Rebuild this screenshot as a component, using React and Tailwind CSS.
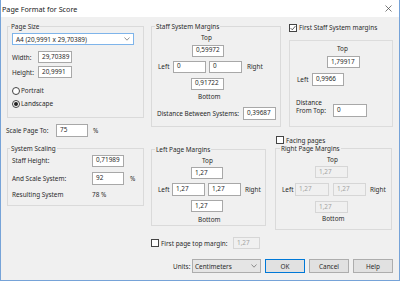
import React from "react";

function Box({ cls = "", value = "", disabled = false }) {
  return (
    <div
      className={`flex items-center pl-[3px] border whitespace-nowrap leading-none ${
        disabled
          ? "bg-[#f0f0f0] border-[#d6d6d6] text-[#a3a3a3]"
          : "bg-white border-[#a8a8a8] text-[#2a2a2a]"
      } ${cls}`}
    >
      {value}
    </div>
  );
}

function Check({ checked = false }) {
  return (
    <div className="w-[8px] h-[8px] border border-[#444444] bg-white flex items-center justify-center shrink-0">
      {checked && (
        <svg width="6" height="6" viewBox="0 0 6 6">
          <path d="M0.6 3.1 L2.3 4.8 L5.4 1.1" fill="none" stroke="#333" strokeWidth="0.8" />
        </svg>
      )}
    </div>
  );
}

function Radio({ checked = false }) {
  return (
    <div className="w-[8px] h-[8px] rounded-full border border-[#444444] bg-white flex items-center justify-center shrink-0">
      {checked && <div className="w-[4px] h-[4px] rounded-full bg-[#222222]" />}
    </div>
  );
}

function Chevron() {
  return (
    <svg width="6" height="4" viewBox="0 0 6 4" className="shrink-0">
      <polyline points="0.5,0.5 3,3.2 5.5,0.5" fill="none" stroke="#666" strokeWidth="0.7" />
    </svg>
  );
}

export default function App() {
  return (
    <div className="w-[400px] h-[281px] bg-[#f0f0f0] border-x border-b border-[#76a3d8] flex flex-col overflow-hidden text-[#2a2a2a] text-[6.4px] leading-[9px] font-['Noto_Sans',sans-serif] whitespace-nowrap">
      {/* Title bar */}
      <div className="h-[17px] bg-white flex items-center justify-between pl-[1px] pr-[7px] shrink-0">
        <span className="text-[7.2px] leading-[10px] text-[#222]">Page Format for Score</span>
        <svg width="7" height="7" viewBox="0 0 7 7">
          <path d="M0.5 0.5 L6.5 6.5 M6.5 0.5 L0.5 6.5" stroke="#444" strokeWidth="0.7" />
        </svg>
      </div>

      {/* Main area */}
      <div className="flex items-start">
        {/* Left column */}
        <div className="ml-[6px] mt-[5px] w-[137px] flex flex-col">
          <fieldset className="h-[96px] border border-[#dadada] pl-[4px] pt-[2px]">
            <legend className="-ml-[2px] px-[1px] leading-[9px]">Page Size</legend>
            <div className="w-[122px] h-[12px] bg-white border border-[#7eb4ea] flex items-center justify-between pl-[3px] pr-[3px]">
              <span>A4 (20,9991 x 29,70389)</span>
              <Chevron />
            </div>
            <div className="mt-[6px] flex items-center h-[12px]">
              <span className="w-[26px]">Width:</span>
              <Box cls="w-[34px] h-[12px]" value="29,70389" />
            </div>
            <div className="mt-[3px] flex items-center h-[12px]">
              <span className="w-[26px]">Height:</span>
              <Box cls="w-[34px] h-[12px]" value="20,9991" />
            </div>
            <div className="mt-[8px] flex items-center h-[9px]">
              <Radio />
              <span className="ml-[1px]">Portrait</span>
            </div>
            <div className="mt-[4px] flex items-center h-[9px]">
              <Radio checked />
              <span className="ml-[1px]">Landscape</span>
            </div>
          </fieldset>

          <div className="mt-[6px] flex items-center h-[13px] -ml-[1px]">
            <span className="w-[50px]">Scale Page To:</span>
            <Box cls="w-[32px] h-[13px]" value="75" />
            <span className="ml-[5px]">%</span>
          </div>

          <fieldset className="mt-[7px] h-[62px] border border-[#dadada] pl-[4px] pt-[1.5px]">
            <legend className="-ml-[2px] px-[1px] leading-[9px]">System Scaling</legend>
            <div className="flex items-center h-[12px]">
              <span className="w-[80px]">Staff Height:</span>
              <Box cls="w-[32px] h-[12px]" value="0,71989" />
            </div>
            <div className="mt-[5px] flex items-center h-[13px]">
              <span className="w-[80px]">And Scale System:</span>
              <Box cls="w-[32px] h-[13px]" value="92" />
              <span className="ml-[6px]">%</span>
            </div>
            <div className="mt-[5px] flex items-center h-[9px]">
              <span className="w-[80px]">Resulting System</span>
              <span>78 %</span>
            </div>
          </fieldset>
        </div>

        {/* Right area */}
        <div className="ml-[7px] flex flex-col">
          {/* Top row */}
          <div className="mt-[5px] flex items-start">
            <fieldset className="w-[130px] h-[105px] border border-[#dadada] pt-[2px]">
              <legend className="ml-[3px] px-[1px] leading-[9px]">Staff System Margins</legend>
              <div className="h-[9px] ml-[49px]">Top</div>
              <Box cls="mt-[2.5px] ml-[40px] w-[32px] h-[12px]" value="0,59972" />
              <div className="mt-[4px] flex items-center h-[12px]">
                <span className="ml-[6px] w-[15px]">Left</span>
                <Box cls="w-[33px] h-[12px]" value="0" />
                <Box cls="ml-[3px] w-[33px] h-[12px]" value="0" />
                <span className="ml-[5px]">Right</span>
              </div>
              <Box cls="mt-[5px] ml-[39px] w-[33px] h-[12px]" value="0,91722" />
              <div className="mt-[2px] h-[9px] ml-[46px]">Bottom</div>
              <div className="mt-[6px] flex items-center h-[13px]">
                <span className="ml-[5px] w-[86px]">Distance Between Systems:</span>
                <Box cls="w-[33px] h-[13px]" value="0,39687" />
              </div>
            </fieldset>

            <div className="ml-[8px] w-[104px] flex flex-col">
              <div className="mt-[1px] h-[9px] flex items-center">
                <Check checked />
                <span className="ml-[2px]">First Staff System margins</span>
              </div>
              <div className="mt-[8px] h-[87px] border border-[#dcdcdc] pt-[2.5px]">
                <div className="h-[9px] ml-[47px]">Top</div>
                <Box cls="mt-[3.5px] ml-[37px] w-[33px] h-[12px]" value="1,79917" />
                <div className="mt-[5px] flex items-center h-[13px]">
                  <span className="ml-[7px] w-[15px]">Left</span>
                  <Box cls="w-[32px] h-[13px]" value="0,9966" />
                </div>
                <div className="mt-[13px] flex items-start">
                  <div className="ml-[6px] w-[37px] leading-[8px]">
                    <div>Distance</div>
                    <div>From Top:</div>
                  </div>
                  <Box cls="mt-[5px] w-[34px] h-[13px]" value="0" />
                </div>
              </div>
            </div>
          </div>

          {/* Bottom row */}
          <div className="flex items-start">
            <fieldset className="mt-[17.5px] w-[115px] h-[81px] border border-[#dadada] pt-[2px]">
              <legend className="ml-[3px] px-[1px] leading-[9px]">Left Page Margins</legend>
              <div className="h-[9px] ml-[50px]">Top</div>
              <Box cls="mt-[2.5px] ml-[39px] w-[32px] h-[12px]" value="1,27" />
              <div className="mt-[4px] flex items-center h-[13px]">
                <span className="ml-[6px] w-[14px]">Left</span>
                <Box cls="w-[33px] h-[13px]" value="1,27" />
                <Box cls="ml-[3px] w-[33px] h-[13px]" value="1,27" />
                <span className="ml-[4px]">Right</span>
              </div>
              <Box cls="mt-[4px] ml-[39px] w-[32px] h-[12px]" value="1,27" />
              <div className="mt-[2.5px] h-[9px] ml-[46px]">Bottom</div>
            </fieldset>

            <div className="ml-[9px] w-[117px] flex flex-col">
              <div className="mt-[9px] h-[8px] flex items-center">
                <div className="ml-[1px]">
                  <Check />
                </div>
                <span className="ml-[2px]">Facing pages</span>
              </div>
              <fieldset className="h-[86px] border border-[#dadada] pt-[2px]">
                <legend className="ml-[4px] px-[1px] leading-[9px]">Right Page Margins</legend>
                <div className="h-[9px] ml-[51px]">Top</div>
                <Box disabled cls="mt-[2px] ml-[39px] w-[33px] h-[12px]" value="1,27" />
                <div className="mt-[5px] flex items-center h-[13px]">
                  <span className="ml-[6px] w-[13px]">Left</span>
                  <Box disabled cls="w-[34px] h-[13px]" value="1,27" />
                  <Box disabled cls="ml-[4px] w-[33px] h-[13px]" value="1,27" />
                  <span className="ml-[4px]">Right</span>
                </div>
                <Box disabled cls="mt-[5px] ml-[39px] w-[33px] h-[12px]" value="1,27" />
                <div className="mt-[1px] h-[9px] ml-[46px]">Bottom</div>
              </fieldset>
            </div>
          </div>
        </div>
      </div>

      {/* First page top margin row */}
      <div className="mt-[7px] ml-[150px] flex items-center h-[12px]">
        <Check />
        <span className="ml-[2px] w-[72px]">First page top margin:</span>
        <Box disabled cls="w-[27px] h-[12px]" value="1,27" />
      </div>

      {/* Buttons row */}
      <div className="mt-[10px] ml-[172px] flex items-center h-[14px]">
        <span className="w-[19px]">Units:</span>
        <div className="w-[69px] h-[14px] bg-[#e5e5e5] border border-[#adadad] flex items-center justify-between pl-[2px] pr-[3px]">
          <span>Centimeters</span>
          <Chevron />
        </div>
        <div className="ml-[4px] w-[40px] h-[14px] bg-[#e1e1e1] border border-[#0078d7] flex items-center justify-center">OK</div>
        <div className="ml-[4px] w-[40px] h-[14px] bg-[#e1e1e1] border border-[#adadad] flex items-center justify-center">Cancel</div>
        <div className="ml-[4px] w-[40px] h-[14px] bg-[#e1e1e1] border border-[#adadad] flex items-center justify-center">Help</div>
      </div>
    </div>
  );
}
